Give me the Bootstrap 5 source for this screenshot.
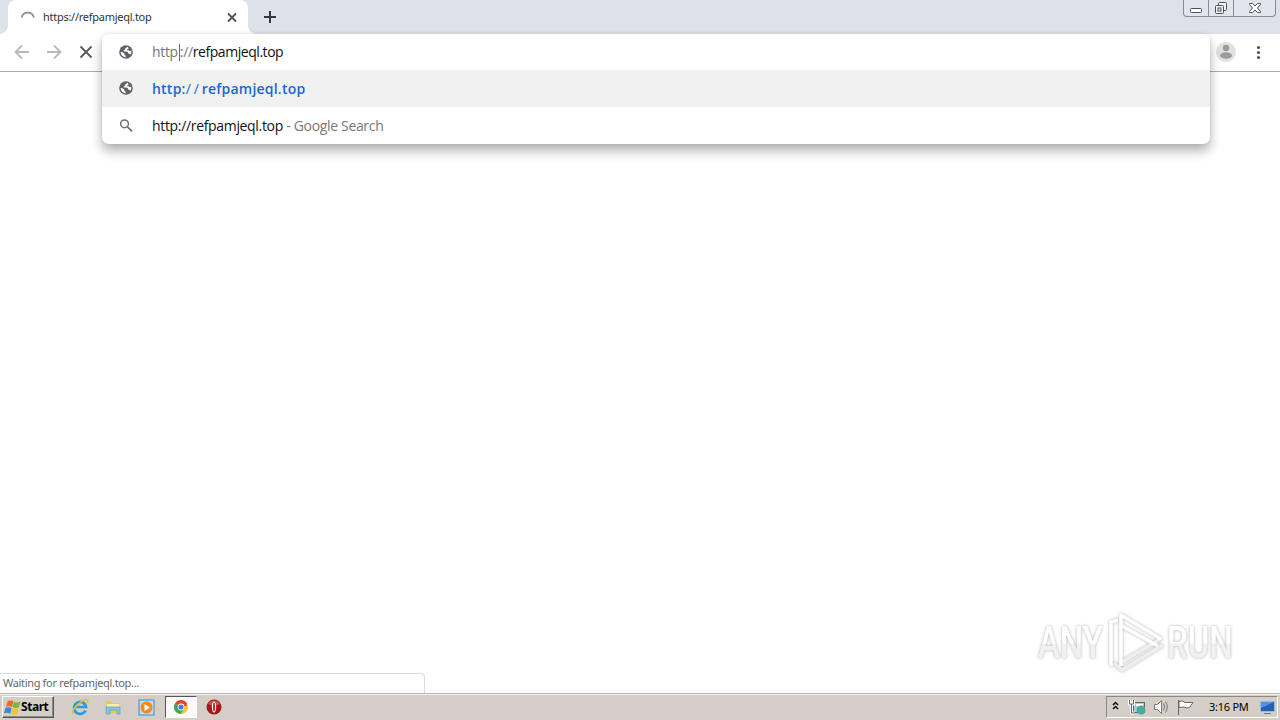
<!DOCTYPE html>
<html lang="en">
<head>
<meta charset="utf-8">
<title>https://refpamjeql.top</title>
<link href="https://cdn.jsdelivr.net/npm/bootstrap@5.3.0/dist/css/bootstrap.min.css" rel="stylesheet">
<script src="https://cdn.jsdelivr.net/npm/bootstrap@5.3.0/dist/js/bootstrap.bundle.min.js"></script>
<style>
body{font-family:"Noto Sans","Open Sans",sans-serif;font-size:11px;line-height:1;color:#222}
svg{display:block;flex:none}
.desktop{width:1280px;height:720px;background:#fff}
.tabstrip{height:34px;background:#dee1e8}
.tab{width:240px;height:34px;margin-left:8px;padding:0 10px 1px 12px;background:#fff;border-radius:8px 8px 0 0}
.tab::before,.tab::after{content:"";position:absolute;bottom:0;width:8px;height:8px}
.tab::before{left:-8px;background:radial-gradient(circle at 0 0,#dee1e8 7.5px,#fff 8px)}
.tab::after{right:-8px;background:radial-gradient(circle at 100% 0,#dee1e8 7.5px,#fff 8px)}
.tab-title{margin-left:8px;letter-spacing:-.27px;color:#333}
.caption-btns{width:93px;height:17px;margin-right:4px;border:1px solid #868a94;border-top:0;border-radius:0 0 4px 4px;background:#e2e5eb}
.caption-btns>div+div{border-left:1px solid #868a94}
.toolbar{height:38px;border-bottom:1px solid #acacac}
.omni{left:102px;top:34px;width:1108px;height:110px;border-radius:7px;box-shadow:0 7px 12px rgba(0,0,0,.3),0 0 4px rgba(0,0,0,.08);font-family:"Open Sans","Noto Sans",sans-serif;font-size:14px;color:#111;z-index:2}
.omni-row{height:37px;padding-left:17px}
.omni-row:first-child{height:36px}
.omni-row.picked{background:#f1f1f1}
.omni-row.picked svg{margin-bottom:2px}
.omni-row>span{margin-left:19px;letter-spacing:-.33px}
.omni-row:first-child>span{letter-spacing:-.45px}
.omni-row.picked>span{color:#1967d2;font-weight:600;letter-spacing:.22px}
.omni-row .slashes{font-weight:400;letter-spacing:2.9px}
.dim{color:#777}
.omni-row:first-child .dim{letter-spacing:-.33px}
.caret{display:inline-block;width:1px;height:17px;margin:0 0 0 1px;background:#666;vertical-align:-4px}
.status{width:425px;height:20px;border:1px solid #dcdcdc;border-left:0;border-bottom:0;border-radius:0 4px 0 0;padding:0 0 2px 3px;color:#666;letter-spacing:-.33px}
.taskbar{height:27px;background:#d4cec7;border-top:1px solid #b8b8b0;box-shadow:inset 0 1px #f4f2ee}
.start{width:52px;height:22px;margin:2px 0 0 2px;border:1px solid;border-color:#fff #555 #555 #fff;box-shadow:inset -1px -1px #908b84;font-size:12px;font-weight:700;color:#000;letter-spacing:-.45px;padding-left:1px}
.slot{width:32px;height:22px;margin-top:2px}
.slot.active{border:1px solid;border-color:#555 #fff #fff #555;background:#fbfaf9}
.tray{width:172px;height:22px;margin:2px 2px 0 0;border:1px solid;border-color:#8d8881 #fff #fff #8d8881;color:#000}
.clock{margin-left:8px;padding-bottom:2px;letter-spacing:-.25px}
.watermark{right:34px;bottom:44px}
.watermark svg{filter:drop-shadow(0 0 1.5px rgba(0,0,0,.32))}
.watermark text{font-family:Roboto,sans-serif;font-weight:500;font-size:44px}
</style>
</head>
<body class="overflow-hidden">
<svg width="0" height="0" class="position-absolute"><defs>
<symbol id="globe" viewBox="0 0 14 14"><circle cx="7" cy="7" r="6.800" fill="#5f6368"/><path d="M8.800 1.800 6.300 3.200v1.100L4.800 5.400v1H8l1.200 1.300v1.100h1.300l.9 1c1-1.400 1.100-3 .8-4.100l-1.600.2-1-.6-.9.300-.7-.7.7-1 1-.1zM1.700 6.900c0 2.900 2.200 5.100 5 5.300V11L5.400 9.800V8.700L3.600 7.300z" fill="#fff"/></symbol>
</defs></svg>
<div class="desktop d-flex flex-column position-relative overflow-hidden">
  <header class="tabstrip d-flex">
    <div class="tab d-flex align-items-center position-relative">
      <svg width="15" height="15" viewBox="0 0 15 15" fill="none" stroke="#8b8e92" stroke-width="1.700"><path d="M1.600 8.500A6.300 6.300 0 0 1 13.900 8.500"/></svg>
      <span class="tab-title">https://refpamjeql.top</span>
      <svg class="ms-auto" width="12" height="12" viewBox="0 0 12 12" stroke="#555" stroke-width="1.800"><path d="m2 2.500 8 8m0-8-8 8"/></svg>
    </div>
    <svg class="mt-2" style="margin-left:13px" width="18" height="18" viewBox="0 0 18 18" stroke="#333840" stroke-width="2"><path d="M9 3v12M3 9h12"/></svg>
    <div class="caption-btns d-flex ms-auto">
      <div class="d-flex justify-content-center" style="width:24px"><svg width="14" height="16" fill="#fff" stroke="#4b505a"><rect x="1.500" y="8.500" width="11" height="4" rx="1"/></svg></div>
      <div class="d-flex justify-content-center" style="width:25px"><svg width="14" height="16" fill="#eef0f4" stroke="#4b505a"><rect x="4.500" y="2.500" width="8" height="8" rx="1"/><rect x="1.500" y="5.500" width="8" height="8" rx="1"/><rect x="4" y="8" width="3" height="3"/></svg></div>
      <div class="d-flex justify-content-center flex-fill"><svg width="14" height="16" fill="#fff" stroke="#4b505a"><path d="M1.500 3.500h3L7 6l2.500-2.500h3v1L9.500 8l3 3.500v1h-3L7 10l-2.500 2.500h-3v-1l3-3.500-3-3.500z"/></svg></div>
    </div>
  </header>
  <nav class="toolbar d-flex">
    <svg width="98" height="36" fill="none" stroke-width="1.800"><path d="M29 18H16m6-6.500L15.500 18l6.500 6.500M47 18h13m-6-6.500L60.500 18 54 24.500" stroke="#b9babc"/><path d="m80.500 12.500 11 11m0-11-11 11" stroke="#54575c"/></svg>
    <svg class="ms-auto" width="64" height="36"><circle cx="10" cy="18" r="10" fill="#e1e1e1"/><circle cx="10" cy="14" r="3.200" fill="#9b9b9b"/><ellipse cx="10" cy="21.500" rx="6" ry="3.300" fill="#9b9b9b"/><g fill="#50545a"><circle cx="42.500" cy="13.500" r="1.600"/><circle cx="42.500" cy="18.500" r="1.600"/><circle cx="42.500" cy="23.500" r="1.600"/></g></svg>
  </nav>
  <div class="omni position-absolute bg-white overflow-hidden">
    <div class="omni-row d-flex align-items-center"><svg width="14" height="14"><use href="#globe"/></svg><span><span class="dim">http<i class="caret"></i>://</span>refpamjeql.top</span></div>
    <div class="omni-row picked d-flex align-items-center"><svg width="14" height="14"><use href="#globe"/></svg><span>http:<span class="slashes">//</span>refpamjeql.top</span></div>
    <div class="omni-row d-flex align-items-center"><svg width="14" height="14" fill="none" stroke="#6c7075"><circle cx="5.500" cy="4.800" r="3.900" stroke-width="1.500"/><path d="m8.500 7.800 4.500 4.500" stroke-width="1.800"/></svg><span>http://refpamjeql.top <span class="dim">- Google Search</span></span></div>
  </div>
  <main class="flex-fill"></main>
  <div class="watermark position-absolute">
    <svg width="214" height="66" viewBox="0 0 214 66">
      <defs><linearGradient id="fade" x1="0" y1="0" x2="0" y2="1"><stop offset=".5" stop-color="#fff"/><stop offset=".53" stop-color="#f1f1f1"/></linearGradient></defs>
      <g fill="url(#fade)"><text transform="translate(6 48) scale(.75 1)">ANY</text><text transform="translate(135 48) scale(.75 1)">RUN</text></g>
      <g fill="none" stroke-width="3.600" stroke-linejoin="round"><path d="m82 53 8 7 41-25M90 52l40-24" stroke="#eee"/><path d="M79 56V12l7-2M89 56V5l40 24" stroke="#fff"/><path d="M90 16l36 20" stroke="#fff"/></g>
    </svg>
  </div>
  <div class="status d-flex align-items-center">Waiting for refpamjeql.top...</div>
  <footer class="taskbar d-flex">
    <div class="start d-flex align-items-center">
      <svg width="17" height="17" viewBox="0 0 17 17"><path d="M3.500 2.500q3-2 6-.3L8 8.300Q5 6.500 2 8z" fill="#ed6b2c"/><path d="M10 2.800q3 1.500 6.500-.3L15 8q-3 1.800-6.300.3z" fill="#7ab83a"/><path d="M1.500 9q3-1.500 6 .2L6.200 14.800Q3.500 13 0 14.300z" fill="#3a87d2"/><path d="M8.300 9.300q3 1.600 6.500 0L13.300 15q-3 1.500-6.300 0z" fill="#f5c32f"/></svg><span>Start</span></div>
    <div class="d-flex" style="margin-left:9.500px;gap:1.700px">
      <div class="slot d-flex align-items-center justify-content-center"><svg width="18" height="18" viewBox="0 0 18 18" fill="none"><path d="M14.500 12.500A6 6 0 1 1 15 9H5" stroke="#2f9ade" stroke-width="2.700"/><path d="M2 16C-.5 13 11 0 16.500 2q1 1-.5 3" stroke="#e6bd3a" stroke-width="1.500"/></svg></div>
      <div class="slot d-flex align-items-center justify-content-center"><svg width="18" height="18" viewBox="0 0 18 18"><path d="M2 3h5l1 2h7v10H2z" fill="#e9c65c"/><path d="M3 6h12v4H3z" fill="#fbeea6"/><path d="M2 9h14v7h-3v-4H6v4H2z" fill="#83c4e8" stroke="#519bc4" stroke-width=".6"/></svg></div>
      <div class="slot d-flex align-items-center justify-content-center"><svg width="17" height="17" viewBox="0 0 17 17"><rect x="1" y="1" width="15" height="15" fill="#b9def5" stroke="#4289c4"/><circle cx="8.500" cy="8.500" r="6" fill="#f08a18"/><path d="m6.500 5 5.500 3.500L6.500 12z" fill="#fff"/></svg></div>
      <div class="slot active d-flex align-items-center justify-content-center"><svg width="14" height="14" viewBox="0 0 14 14"><circle cx="7" cy="7" r="7" fill="#f3c52c"/><path d="M7 7 1 3.500a7 7 0 0 1 12 0z" fill="#dc4437"/><path d="M1 3.500A7 7 0 0 0 6.500 14L10 8.500 7 7z" fill="#3fa45a"/><path d="M7 3.500h6L12 6H7z" fill="#dc4437"/><circle cx="7" cy="7" r="3.400" fill="#fff"/><circle cx="7" cy="7" r="2.600" fill="#3f7fe0"/></svg></div>
      <div class="slot d-flex align-items-center justify-content-center"><svg width="16" height="16"><circle cx="8" cy="8" r="7.500" fill="#a81619"/><path d="M2 5a7 7 0 0 1 12 0q-6 3-12 0" fill="#d0504c"/><ellipse cx="8" cy="8" rx="2.200" ry="5.600" fill="#fff"/><ellipse cx="8" cy="8" rx=".9" ry="4.500" fill="#a81619"/></svg></div>
    </div>
    <div class="tray d-flex align-items-center ms-auto">
      <svg width="94" height="20" viewBox="0 0 94 20" fill="none"><path d="m6 8 2.500-2.500L11 8m-5 4 2.500-2.500L11 12" stroke="#000" stroke-width="1.400"/><rect x="26.500" y="5.500" width="11" height="10" fill="#a9ccd4" stroke="#58696d"/><path d="M29 7h7v2h-7z" fill="#fff"/><circle cx="34" cy="13" r="4.500" fill="#4cab9f"/><path d="M22.500 3v4h4V3m-2 4v9h3" stroke="#fff" stroke-width="3"/><path d="M22.500 3v4h4V3m-2 4v9h3" stroke="#666"/><path d="M47.500 7.500v5h3l4 4v-13l-4 4z" fill="#fff" stroke="#777"/><path d="M56.500 6.500q2 3.500 0 7m2-9q3.500 5.500 0 11" stroke="#777"/><path d="M71.500 3v15M72 4.500q4-1.500 6 1h8l-3.500 5q-3.500 1-5.500-.5l-5 .5z" fill="#fff" stroke="#666"/></svg>
      <span class="clock text-nowrap">3:16 PM</span>
      <svg class="ms-auto" width="17" height="17" style="margin-right:1px"><rect x="1.500" y="2.500" width="14" height="10" fill="#2460ba" stroke="#99b9df"/><path d="M2 3h13L2 9z" fill="#5a91dc"/><path d="M5 14.500h7" stroke="#62758d"/></svg>
    </div>
  </footer>
</div>
</body>
</html>
